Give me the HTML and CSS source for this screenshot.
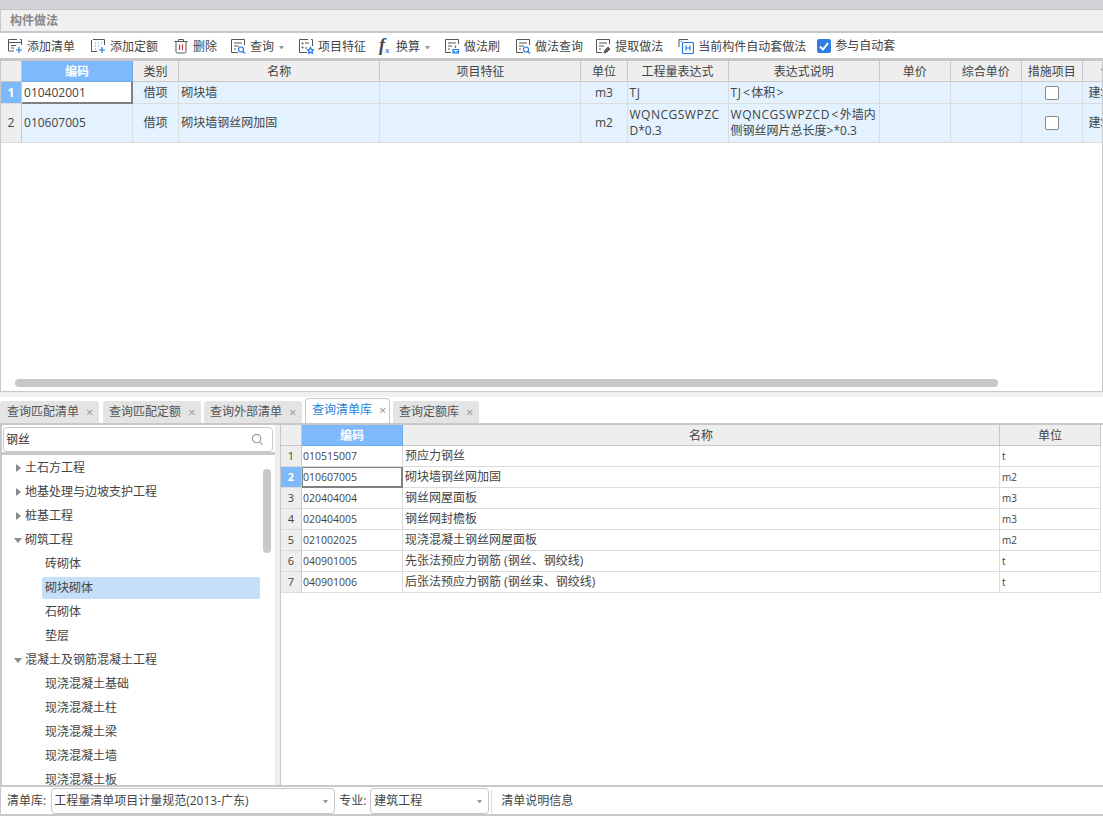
FILE: index.html
```html
<!DOCTYPE html>
<html lang="zh">
<head>
<meta charset="utf-8">
<title>构件做法</title>
<link rel="stylesheet" href="styles.css">
</head>
<body>
<div class="app">
  <div class="topstrip"></div>
  <div class="titlebar">构件做法</div>
  <div class="toolbar">
    <div class="tool"><svg class="ic" viewBox="0 0 16 16"><path class="k" d="M10 1.500H1.500v11.500H7M13 1.500h1.500V7M1.500 4.500h13M4 7.500h5M4 10h3"/><path class="b" d="M12 9v6M9 12h6"/></svg><span>添加清单</span></div>
    <div class="tool"><svg class="ic" viewBox="0 0 16 16"><path class="k" d="M3 1.500h11.500V7M1.500 2v11.500H7"/><path class="k d" d="M5 5h1M8 5h1M11 5h1M5 8h1M8 8h1M5 11h1"/><path class="b" d="M12 9v6M9 12h6"/></svg><span>添加定额</span></div>
    <div class="tool t-sm"><svg class="ic" viewBox="0 0 16 16"><path class="k" d="M1.500 3.500h13M5.500 3V1.500h5V3M3 3.500v10a1.500 1.500 0 0 0 1.500 1.500h7a1.500 1.500 0 0 0 1.500-1.500v-10"/><path class="r" d="M6.500 6.500v5.500M9.500 6.500v5.500"/></svg><span>删除</span></div>
    <div class="tool t-sm"><svg class="ic" viewBox="0 0 16 16"><path class="k" d="M14.500 7V1.500h-13v13H8M4 5h8M4 8h5M4 11h2"/><circle class="b" cx="11" cy="11.500" r="2.500"/><path class="b" d="M13 13.500l2 2"/></svg><span>查询</span><i class="caret"></i></div>
    <div class="tool t-sm"><svg class="ic" viewBox="0 0 16 16"><path class="k" d="M10 1.500H1.500v13H9M13 1.500h1.500V8M4 5h1v1H4zM7 5h4M4 9h1v1H4zM7 10h2"/><path class="b" d="M12.500 9.500l1 2 2 .3-1.500 1.500.4 2-1.900-1-1.900 1 .4-2-1.500-1.500 2-.3z"/></svg><span>项目特征</span></div>
    <div class="tool t-fx"><span class="fx">f<sub>x</sub></span><span>换算</span><i class="caret"></i></div>
    <div class="tool"><svg class="ic" viewBox="0 0 16 16"><path class="k" d="M14.500 6V1.500h-13v13H7M4 5h8M4 8h4M4 11h2"/><path class="b" d="M11.500 7.500v2.500M9 15v-3.500h5.500V15zM10.500 15v-2M13 15v-2"/></svg><span>做法刷</span></div>
    <div class="tool t-xs"><svg class="ic" viewBox="0 0 16 16"><path class="k" d="M14.500 7V1.500h-13v13H8M4 5h8M4 8h5M4 11h2"/><circle class="b" cx="11" cy="11.500" r="2.500"/><path class="b" d="M13 13.500l2 2"/></svg><span>做法查询</span></div>
    <div class="tool"><svg class="ic" viewBox="0 0 16 16"><path class="k" d="M14.500 6V1.500h-13v13H7M4 5h8M4 8h5M4 11h2"/><path class="g" d="M9 15l1-3 3-3 2 2-3 3z"/></svg><span>提取做法</span></div>
    <div class="tool t-auto"><svg class="ic" viewBox="0 0 16 16"><path class="k" d="M1 9V1.500h9M3 3.500h1"/><rect class="b" x="4.500" y="4.500" width="11" height="11" rx="1"/><path class="b" d="M8 7.500v5M12 7.500v5M8 10h4"/></svg><span>当前构件自动套做法</span></div>
    <label class="check"><span class="checkbox"><svg viewBox="0 0 14 14"><path d="M3 7.500l3 3 5-6.500"/></svg></span><span>参与自动套</span></label>
  </div>

  <div class="gridpanel">
    <table class="grid top">
      <colgroup><col class="c21"><col class="c111"><col class="c46"><col class="c201"><col class="c201"><col class="c46"><col class="c101"><col class="c151"><col class="c71"><col class="c71"><col class="c61"><col class="c60"></colgroup>
      <thead><tr><th></th><th class="on">编码</th><th>类别</th><th>名称</th><th>项目特征</th><th>单位</th><th>工程量表达式</th><th>表达式说明</th><th>单价</th><th>综合单价</th><th>措施项目</th><th>专业</th></tr></thead>
      <tbody>
        <tr class="r1"><td class="rh on">1</td><td class="cur">010402001</td><td class="ctr">借项</td><td>砌块墙</td><td></td><td class="ctr">m3</td><td><span class="caps">TJ</span></td><td><span class="caps">TJ</span><span class="sym">&lt;</span>体积<span class="sym">&gt;</span></td><td></td><td></td><td class="ctr"><span class="box"></span></td><td class="ctr">建筑工程</td></tr>
        <tr class="r2"><td class="rh">2</td><td>010607005</td><td class="ctr">借项</td><td>砌块墙钢丝网加固</td><td></td><td class="ctr">m2</td><td class="wrap"><span class="caps">WQNCGSWPZC</span><br>D*0.3</td><td class="wrap"><span class="caps">WQNCGSWPZCD</span><span class="sym">&lt;</span>外墙内<br>侧钢丝网片总长度&gt;*0.3</td><td></td><td></td><td class="ctr"><span class="box"></span></td><td class="ctr">建筑工程</td></tr>
      </tbody>
    </table>
    <div class="hscroll"><div class="hthumb"></div></div>
  </div>

  <div class="tabs">
    <div class="tab first">查询匹配清单<b>×</b></div>
    <div class="tab second">查询匹配定额<b>×</b></div>
    <div class="tab">查询外部清单<b>×</b></div>
    <div class="tab active">查询清单库<b>×</b></div>
    <div class="tab">查询定额库<b>×</b></div>
  </div>

  <div class="lower">
    <div class="left">
      <div class="searchwrap">
        <div class="search"><span>钢丝</span><svg class="mag" viewBox="0 0 14 14"><circle cx="6" cy="6" r="4.500"/><path d="M9.500 9.500l3 3"/></svg></div>
      </div>
      <div class="tree">
        <div class="node"><i class="tri"></i>土石方工程</div>
        <div class="node"><i class="tri"></i>地基处理与边坡支护工程</div>
        <div class="node"><i class="tri"></i>桩基工程</div>
        <div class="node"><i class="tri open"></i>砌筑工程</div>
        <div class="leaf">砖砌体</div>
        <div class="leaf sel">砌块砌体</div>
        <div class="leaf">石砌体</div>
        <div class="leaf">垫层</div>
        <div class="node"><i class="tri open"></i>混凝土及钢筋混凝土工程</div>
        <div class="leaf">现浇混凝土基础</div>
        <div class="leaf">现浇混凝土柱</div>
        <div class="leaf">现浇混凝土梁</div>
        <div class="leaf">现浇混凝土墙</div>
        <div class="leaf">现浇混凝土板</div>
        <div class="vthumb"></div>
      </div>
    </div>
    <div class="right">
      <table class="grid lib">
        <colgroup><col class="c21"><col class="c101"><col class="c597"><col class="c101"></colgroup>
        <thead><tr><th></th><th class="on">编码</th><th>名称</th><th>单位</th></tr></thead>
        <tbody>
          <tr><td class="rh">1</td><td class="sm">010515007</td><td>预应力钢丝</td><td class="unit">t</td></tr>
          <tr><td class="rh on">2</td><td class="sm cur">010607005</td><td>砌块墙钢丝网加固</td><td class="unit">m2</td></tr>
          <tr><td class="rh">3</td><td class="sm">020404004</td><td>钢丝网屋面板</td><td class="unit">m3</td></tr>
          <tr><td class="rh">4</td><td class="sm">020404005</td><td>钢丝网封檐板</td><td class="unit">m3</td></tr>
          <tr><td class="rh">5</td><td class="sm">021002025</td><td>现浇混凝土钢丝网屋面板</td><td class="unit">m2</td></tr>
          <tr><td class="rh">6</td><td class="sm">040901005</td><td>先张法预应力钢筋 (钢丝、钢绞线)</td><td class="unit">t</td></tr>
          <tr><td class="rh">7</td><td class="sm">040901006</td><td>后张法预应力钢筋 (钢丝束、钢绞线)</td><td class="unit">t</td></tr>
        </tbody>
      </table>
    </div>
  </div>

  <div class="footer">
    <span class="flabel">清单库:</span>
    <div class="select s-lib">工程量清单项目计量规范(2013-广东)<i class="caret"></i></div>
    <span class="flabel f2">专业:</span>
    <div class="select s-maj">建筑工程<i class="caret"></i></div>
    <span class="fsep"></span>
    <span class="finfo">清单说明信息</span>
  </div>
</div>
</body>
</html>
```
FILE: styles.css
```css
* { box-sizing: border-box; }
html, body { margin: 0; padding: 0; }
body {
  width: 1103px;
  height: 816px;
  overflow: hidden;
  background: #fff;
  color: #333;
  font: 12px/16px "Open Sans", "Noto Sans CJK SC", sans-serif;
}
.app { display: flex; flex-direction: column; height: 816px; background: #c8c8ca; }

.topstrip { height: 10px; flex: none; background: #d3d4d8; border-bottom: 1px solid #c4c4c6; }
.titlebar {
  height: 21px; flex: none; padding-left: 9px; background: #f0f0f0;
  border-left: 1px solid #c8c8ca; color: #888; font-weight: 700; line-height: 21px;
}
.toolbar {
  height: 29px; flex: none; display: flex; align-items: center; padding: 3px 0 0 7px; background: #fff;
  border-top: 2px solid #c8c8ca; border-bottom: 2px solid #c8c8ca; color: #444;
}
.tool { display: flex; align-items: center; margin-right: 15px; white-space: nowrap; }
.tool.t-sm { margin-right: 13px; }
.tool.t-fx { margin-right: 13px; }
.tool.t-xs { margin-right: 12px; }
.tool.t-auto { margin-right: 11px; }
.ic { width: 16px; height: 16px; margin: -2px 4px 0 0; flex: none; fill: none; }
.k { fill: none; stroke: #555; stroke-width: 1; }
.k.d { stroke: #4a90e2; }
.b { fill: none; stroke: #1f7ae0; stroke-width: 1.200; }
.r { fill: none; stroke: #d9323a; stroke-width: 1.200; }
.g { fill: #666; stroke: #555; }
.caret {
  display: block; width: 5px; height: 0;
  border-left: 2.500px solid transparent; border-right: 2.500px solid transparent; border-top: 3px solid #999;
}
.tool .caret { margin-left: 5px; margin-right: 1px; }
.fx {
  width: 13px; margin: -5px 4px 0 0; color: #444; font: italic 700 18px/16px "Liberation Serif", serif;
}
.fx sub { font-size: 9px; line-height: 0; color: #1f7ae0; vertical-align: -2px; }
.check { display: flex; align-items: center; margin-bottom: 3px; }
.checkbox {
  width: 14px; height: 14px; margin-right: 4px; border-radius: 2px; background: #2f7fe0; display: block;
}
.checkbox svg { display: block; width: 14px; height: 14px; fill: none; stroke: #fff; stroke-width: 2; }

.gridpanel {
  height: 332px; flex: none; position: relative; overflow: hidden; background: #fff;
  border: 1px solid #c8c8ca;
}
table.grid { table-layout: fixed; border-collapse: separate; border-spacing: 0; color: #444; }
.grid th {
  height: 21px; padding: 2px 0 0; background: #eeeeee; font-weight: 400; text-align: center; color: #444;
  border-right: 1px solid #c8c8c8; border-bottom: 1px solid #c8c8c8; overflow: hidden; white-space: nowrap;
}
.grid th.on { background: #7eb9fb; color: #fff; font-weight: 700; border-color: #6ea9ea; }
.grid td {
  padding: 0 2px; border-right: 1px solid #dcdcdc; border-bottom: 1px solid #dcdcdc;
  overflow: hidden; white-space: nowrap;
}
.grid .ctr { text-align: center; }
.grid td.rh {
  padding: 0; text-align: center; background: #eeeeee; border-right-color: #c8c8c8; border-bottom-color: #dcdcdc;
}
.grid td.rh.on { background: #7eb9fb; color: #fff; font-weight: 700; }
.grid td.wrap { line-height: 16px; padding-right: 1px; }
.caps { letter-spacing: .5px; }
.sym { padding: 0 1.500px; }
.grid td.cur {
  background: #fff; border-right-color: #808080; border-bottom-color: #808080;
  box-shadow: inset -1px -1px 0 #808080;
}
.lib td.cur { box-shadow: inset -1px -1px 0 #808080, inset 1px 1px 0 #808080; }

.top { width: 1142px; }
.top tbody tr { background: #e3f2fe; }
.top .r1 td { height: 22px; }
.top .r2 td { height: 39px; }
.c21 { width: 21px; }
.c111 { width: 111px; }
.c46 { width: 46px; }
.c201 { width: 201px; }
.c101 { width: 101px; }
.c151 { width: 151px; }
.c71 { width: 71px; }
.c61 { width: 61px; }
.c60 { width: 60px; }
.c597 { width: 597px; }
.box {
  display: block; width: 14px; height: 14px; margin-left: 21px; background: #fff;
  border: 1px solid #888; border-radius: 2px;
}
.hscroll { position: absolute; left: 14px; top: 318px; width: 983px; height: 8px; }
.hthumb { height: 8px; border-radius: 4px; background: #c8c8c8; }

.tabs {
  height: 31px; flex: none; display: flex; align-items: flex-end; gap: 3px; background: #fff;
  border-top: 5px solid #f0f0f0; color: #555;
}
.tab {
  height: 22px; padding-left: 6px; background: #e4e4e4; border-radius: 3px 3px 0 0;
  line-height: 22px; white-space: nowrap; display: flex;
}
.tab.first { padding-left: 7px; margin-right: 1px; }
.tab b { font-weight: 400; color: #999; margin-left: 7px; width: 13px; font-size: 13px; }
.tab.active {
  height: 25px; background: #fff; color: #2a7fdc; border: 1px solid #c8c8c8; border-bottom: 0;
  border-radius: 4px 4px 0 0;
}
.tab.active b { width: 10px; }

.lower { height: 362px; flex: none; display: flex; border-top: 2px solid #c8c8c8; background: #fff; }
.left { width: 276px; flex: none; display: flex; flex-direction: column; border-left: 2px solid #c8c8ca; }
.searchwrap { height: 30px; flex: none; padding: 2px 3px 0 1px; background: #fff; border-bottom: 3px solid #c8c8ca; }
.search {
  height: 25px; display: flex; align-items: center; justify-content: space-between; padding: 0 8px 0 2px;
  border: 1px solid #c8c8c8; border-radius: 4px; background: #fff;
}
.mag { width: 13px; height: 13px; fill: none; stroke: #999; stroke-width: 1.200; }
.tree { flex: 1; position: relative; overflow: hidden; color: #444; padding-top: 1px; }
.node, .leaf { height: 24px; line-height: 24px; white-space: nowrap; }
.node { display: flex; align-items: center; padding-left: 14px; }
.leaf { padding-left: 43px; }
.leaf.sel {
  margin: 1px 16px 1px 40px; padding-left: 3px; height: 22px; line-height: 22px;
  background: #c6dff8; border-radius: 2px;
}
.tri {
  width: 0; height: 0; margin-right: 4px; border-top: 4px solid transparent; border-bottom: 4px solid transparent;
  border-left: 5px solid #8a8a8a;
}
.tri.open {
  border: 0; border-left: 4px solid transparent; border-right: 4px solid transparent; border-top: 5px solid #8a8a8a;
  margin-left: -2px; margin-right: 3px;
}
.vthumb { position: absolute; left: 261px; top: 14px; width: 8px; height: 84px; border-radius: 4px; background: #c8c8c8; }

.right { flex: 1; border-left: 1px solid #c8c8c8; margin-left: 4px; background: #fff; overflow: hidden; box-shadow: -5px 0 0 #eeeeee; }
.lib { width: 820px; }
.lib td { height: 21px; font-size: 12px; line-height: 16px; padding: 0 2px; }
.lib td.sm { font-size: 10.500px; padding-left: 1px; }
.lib td.unit { font-size: 10px; }
.lib td.rh { font-size: 11px; }

.footer {
  height: 31px; flex: none; display: flex; align-items: center; padding-left: 6px; background: #fff;
  border-top: 2px solid #c8c8ca; border-bottom: 2px solid #c8c8ca; border-left: 1px solid #c8c8ca; color: #444;
}
.flabel { white-space: nowrap; }
.select {
  height: 26px; display: flex; align-items: center; justify-content: space-between; padding: 1px 6px 0 2px;
  border: 1px solid #c8c8c8; border-radius: 4px; white-space: nowrap; margin-left: 5px;
}
.s-lib { width: 284px; }
.s-maj { width: 119px; margin-left: 4px; padding-left: 3px; }
.f2 { margin-left: 4px; }
.fsep { width: 1px; height: 24px; background: #ddd; margin: 0 9px 0 2px; }
.finfo { padding-top: 1px; }
```
